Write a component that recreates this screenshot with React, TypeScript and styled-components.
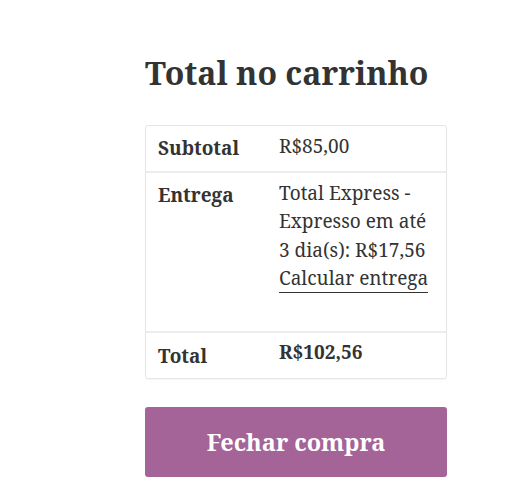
import styled, { createGlobalStyle } from 'styled-components'

const GlobalStyle = createGlobalStyle`
  html, body {
    margin: 0;
    padding: 0;
    background: #ffffff;
  }
  body {
    font-family: "Noto Serif", "DejaVu Serif", serif;
    color: #333333;
  }
`

const Page = styled.div`
  padding: 50px 0 0 145px;
  width: 302px;
`

const Title = styled.h2`
  margin: 0 0 30px;
  font-size: 32px;
  line-height: 45px;
  font-weight: 700;
  color: #333333;
`

const TotalsTable = styled.div`
  border: 1px solid #e6e6e6;
  border-radius: 3px;
  box-shadow: 0 1px 1px rgba(0, 0, 0, 0.04);
`

const Row = styled.div<{ $bottom?: number }>`
  display: grid;
  grid-template-columns: 121px 1fr;
  padding-bottom: ${(p) => p.$bottom ?? 9}px;
  & + & {
    border-top: 2px solid #ececec;
  }
`

const Label = styled.div<{ $top?: number }>`
  padding: ${(p) => p.$top ?? 7.5}px 12px 0;
  font-size: 19px;
  line-height: 28.5px;
  font-weight: 700;
`

const Value = styled.div<{ $strong?: boolean }>`
  padding: 5.5px 12px 0;
  font-size: 19px;
  line-height: 28.5px;
  font-weight: ${(p) => (p.$strong ? 700 : 400)};
`

const CalcLink = styled.a`
  color: #333333;
  text-decoration: none;
  border-bottom: 1px solid #333333;
  padding-bottom: 1px;
`

const CheckoutButton = styled.button`
  display: block;
  width: 100%;
  margin-top: 28px;
  height: 70px;
  border: 0;
  border-radius: 3px;
  background: #a46497;
  color: #ffffff;
  font-family: inherit;
  font-size: 23.5px;
  font-weight: 700;
  cursor: pointer;
`

const App = () => {
  return (
    <>
      <GlobalStyle />
      <Page>
        <Title>Total no carrinho</Title>
        <TotalsTable>
          <Row>
            <Label>Subtotal</Label>
            <Value>R$85,00</Value>
          </Row>
          <Row $bottom={38}>
            <Label>Entrega</Label>
            <Value>
              Total Express - Expresso em até 3 dia(s): R$17,56
              <br />
              <CalcLink href="#">Calcular entrega</CalcLink>
            </Value>
          </Row>
          <Row $bottom={8}>
            <Label $top={9}>Total</Label>
            <Value $strong>R$102,56</Value>
          </Row>
        </TotalsTable>
        <CheckoutButton>Fechar compra</CheckoutButton>
      </Page>
    </>
  )
}

export default App
